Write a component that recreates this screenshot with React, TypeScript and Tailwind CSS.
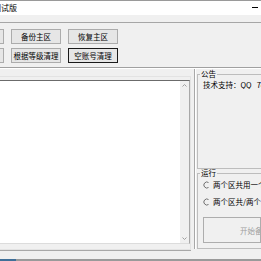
const font = { fontFamily: '"Noto Sans CJK SC", "Noto Sans", sans-serif' };

function Btn({ label, focused }: { label?: string; focused?: boolean }) {
  return (
    <div
      className={`w-[50px] h-[15px] shrink-0 flex items-center justify-center bg-[#e6e6e6] text-[7.5px] leading-none text-black border ${
        focused ? 'border-[#1a1a1a]' : 'border-[#acacac]'
      }`}
    >
      {label}
    </div>
  );
}

function Radio({ label }: { label: string }) {
  return (
    <div className="flex items-center gap-[3px] h-[9px] text-[7.5px] leading-none text-black whitespace-nowrap">
      <svg width="7" height="8" viewBox="0 0 7 8" className="shrink-0">
        <path d="M5.5 1.5 A3 3 0 1 0 5.5 6.5" fill="none" stroke="#707070" strokeWidth="1" />
      </svg>
      <span>{label}</span>
    </div>
  );
}

function Group({ title, className, children }: { title: string; className: string; children: React.ReactNode }) {
  return (
    <div className={`relative border border-r-0 border-[#bdbdbd] ${className}`}>
      <span className="absolute left-[2px] top-[-5px] px-[1px] bg-[#f0f0f0] text-[7.5px] leading-none text-black">{title}</span>
      {children}
    </div>
  );
}

export default function App() {
  return (
    <div className="w-[261px] h-[261px] overflow-hidden bg-[#f0f0f0] flex flex-col" style={font}>
      {/* title bar */}
      <div className="h-[15px] shrink-0 bg-white border-t border-[#9a9a9a] flex items-center justify-between overflow-hidden">
        <span className="ml-[-7px] text-[8px] leading-none text-black whitespace-nowrap">测试版</span>
        <div className="w-[6px] h-[1px] bg-black mr-[3px] mb-[1px]" />
      </div>
      {/* menu strip */}
      <div className="h-[8px] shrink-0 bg-[#f0f0f0] border-b border-[#a6a6a6]" />
      {/* toolbar */}
      <div className="shrink-0 pt-[6px] pb-[4px] flex flex-col gap-[4px] border-b border-[#a0a0a0] overflow-hidden">
        <div className="flex gap-[7px] ml-[-46px]">
          <Btn />
          <Btn label="备份主区" />
          <Btn label="恢复主区" />
        </div>
        <div className="flex gap-[7px] ml-[-46px]">
          <Btn />
          <Btn label="根据等级清理" />
          <Btn label="空账号清理" focused />
        </div>
      </div>
      <div className="h-[1px] shrink-0 bg-white" />
      {/* main */}
      <div className="flex-1 flex min-h-0">
        {/* left */}
        <div className="w-[191px] shrink-0 pt-[7px] flex flex-col">
          <div className="flex-1 border-t border-r border-b border-[#e3e3e3] pt-[3px] pb-[3px] flex flex-col">
            <div className="h-[164px] bg-white border-t border-[#6b6b6b] border-r border-r-[#a8a8a8] border-b border-b-[#dcdcdc] flex justify-end">
              <div className="w-[9px] h-full bg-[#f0f0f0] flex flex-col items-center justify-between py-[3px]">
                <svg width="5" height="3" viewBox="0 0 5 3">
                  <path d="M0.5 2.5 L2.5 0.5 L4.5 2.5" fill="none" stroke="#a0a0a0" strokeWidth="1" />
                </svg>
                <svg width="5" height="3" viewBox="0 0 5 3">
                  <path d="M0.5 0.5 L2.5 2.5 L4.5 0.5" fill="none" stroke="#a0a0a0" strokeWidth="1" />
                </svg>
              </div>
            </div>
          </div>
          <div className="h-[9px] shrink-0 border-t border-[#a8a8a8]" />
        </div>
        {/* right */}
        <div className="flex-1 pl-[3px] flex min-w-0">
          <div className="flex-1 border-l border-[#a8a8a8] flex min-w-0 mb-[10px]">
            <div className="flex-1 border-l border-white pl-[1px] pt-[5px] flex flex-col gap-[4px] min-w-0">
              <Group title="公告" className="h-[96px]">
                <div className="pl-[5px] pt-[6px] text-[7.5px] leading-none text-black whitespace-nowrap overflow-hidden">
                  技术支持：QQ&nbsp;&nbsp;&nbsp;748615279
                </div>
              </Group>
              <Group title="运行" className="h-[76px]">
                <div className="pl-[5px] pt-[6px] flex flex-col gap-[8px] overflow-hidden">
                  <Radio label="两个区共用一个账号" />
                  <Radio label="两个区共/两个区独立" />
                </div>
                <div className="ml-[5px] mt-[11px] h-[26px] border border-[#adadad] bg-[#f0f0f0] flex items-center pl-[36px] text-[7.5px] leading-none text-[#a0a0a0] whitespace-nowrap overflow-hidden">
                  开始备份
                </div>
              </Group>
            </div>
          </div>
        </div>
      </div>
      {/* bottom edge */}
      <div className="h-[2px] shrink-0 flex">
        <div className="w-[16px] bg-[#3f6f98]" />
        <div className="flex-1 bg-[#9a9a9a]" />
      </div>
    </div>
  );
}
